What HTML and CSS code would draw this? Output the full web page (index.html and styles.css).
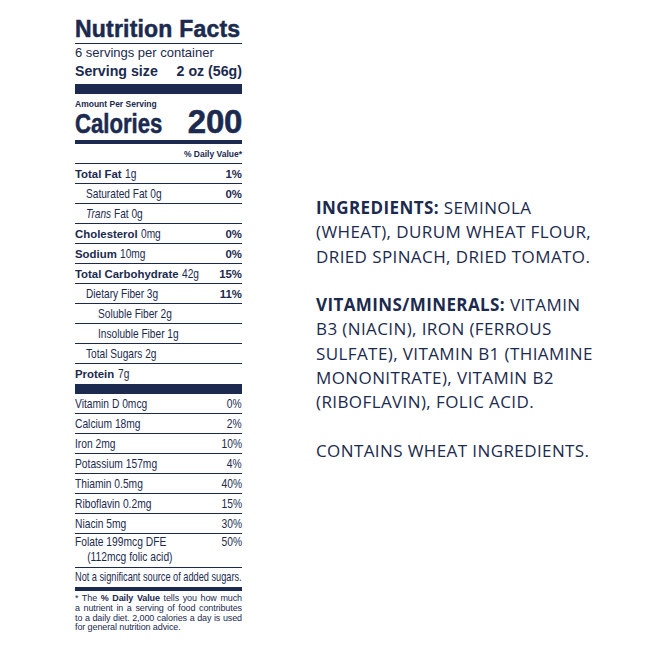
FILE: index.html
```html
<!DOCTYPE html>
<html lang="en">
<head>
<meta charset="utf-8">
<title>Nutrition Facts</title>
<link rel="stylesheet" href="styles.css">
</head>
<body>
<main class="page">
  <section class="label">
    <h1 class="title">Nutrition Facts</h1>
    <p class="servings">6 servings per container</p>
    <p class="serving-size"><span>Serving size</span><span>2 oz (56g)</span></p>
    <div class="bar bar-thick"></div>
    <p class="amount">Amount Per Serving</p>
    <p class="calories"><span class="cal-label">Calories</span><span class="cal-value">200</span></p>
    <div class="bar bar-mid"></div>
    <p class="dv-head">% Daily Value*</p>
    <ul class="rows">
      <li class="row"><span><b>Total Fat</b> <span class="n">1g</span></span><b>1%</b></li>
      <li class="row ind1"><span class="n">Saturated Fat 0g</span><b>0%</b></li>
      <li class="row ind1"><span class="n"><i>Trans</i> Fat 0g</span></li>
      <li class="row"><span><b>Cholesterol</b> <span class="n">0mg</span></span><b>0%</b></li>
      <li class="row"><span><b>Sodium</b> <span class="n">10mg</span></span><b>0%</b></li>
      <li class="row"><span><b>Total Carbohydrate</b> <span class="n">42g</span></span><b>15%</b></li>
      <li class="row ind1"><span class="n">Dietary Fiber 3g</span><b>11%</b></li>
      <li class="row ind2"><span class="n">Soluble Fiber 2g</span></li>
      <li class="row ind2"><span class="n">Insoluble Fiber 1g</span></li>
      <li class="row ind1"><span class="n">Total Sugars 2g</span></li>
      <li class="row last"><span><b>Protein</b> <span class="n">7g</span></span></li>
    </ul>
    <div class="bar bar-thick"></div>
    <ul class="rows vitamins">
      <li class="vrow"><span class="n">Vitamin D 0mcg</span><span class="n r">0%</span></li>
      <li class="vrow"><span class="n">Calcium 18mg</span><span class="n r">2%</span></li>
      <li class="vrow"><span class="n">Iron 2mg</span><span class="n r">10%</span></li>
      <li class="vrow"><span class="n">Potassium 157mg</span><span class="n r">4%</span></li>
      <li class="vrow"><span class="n">Thiamin 0.5mg</span><span class="n r">40%</span></li>
      <li class="vrow"><span class="n">Riboflavin 0.2mg</span><span class="n r">15%</span></li>
      <li class="vrow"><span class="n">Niacin 5mg</span><span class="n r">30%</span></li>
      <li class="vrow folate"><span class="n">Folate 199mcg DFE<br><span class="sub">(112mcg folic acid)</span></span><span class="n r">50%</span></li>
    </ul>
    <p class="not-sig"><span class="n">Not a significant source of added sugars.</span></p>
    <div class="bar bar-mid"></div>
    <div class="footnote">
      <span class="fl">* The <b>% Daily Value</b> tells you how much</span>
      <span class="fl">a nutrient in a serving of food contributes</span>
      <span class="fl">to a daily diet. 2,000 calories a day is used</span>
      <span class="fl fl-last">for general nutrition advice.</span>
    </div>
  </section>
  <section class="ingredients">
    <p class="para"><b>INGREDIENTS:</b> SEMINOLA<br>(WHEAT), DURUM WHEAT FLOUR,<br>DRIED SPINACH, DRIED TOMATO.</p>
    <p class="para"><b>VITAMINS/MINERALS:</b> VITAMIN<br>B3 (NIACIN), IRON (FERROUS<br>SULFATE), VITAMIN B1 (THIAMINE<br>MONONITRATE), VITAMIN B2<br>(RIBOFLAVIN), FOLIC ACID.</p>
    <p class="para">CONTAINS WHEAT INGREDIENTS.</p>
  </section>
</main>
</body>
</html>
```

FILE: styles.css
```css
* { box-sizing: border-box; }

html, body {
  margin: 0;
  padding: 0;
  background: #ffffff;
}

.page {
  display: flex;
  align-items: flex-start;
  padding: 16px 0 0 75px;
  color: #1b2a4e;
  font-family: "Liberation Sans", Arial, sans-serif;
}

.label {
  width: 167px;
  flex: none;
}

.label p { margin: 0; }

.title {
  margin: 0;
  font-size: 23px;
  line-height: 27px;
  font-weight: 700;
  letter-spacing: 0.2px;
  white-space: nowrap;
  -webkit-text-stroke: 0.5px #1b2a4e;
  border-bottom: 1px solid #1b2a4e;
}

.servings {
  padding-top: 2px;
  font-size: 13px;
  line-height: 14px;
}

.label .serving-size {
  display: flex;
  justify-content: space-between;
  padding-top: 3px;
  font-size: 14.2px;
  line-height: 16px;
  font-weight: 700;
  margin-bottom: 5px;
}

.bar { background: #1b2a4e; }
.bar-thick { height: 10px; }
.bar-mid { height: 4px; }

.amount {
  padding-top: 5px;
  font-size: 8.5px;
  line-height: 10px;
  font-weight: 700;
}

.label .calories {
  display: flex;
  justify-content: space-between;
  align-items: baseline;
  height: 26px;
  line-height: 26px;
  font-weight: 700;
  margin-bottom: 5px;
  -webkit-text-stroke: 0.5px #1b2a4e;
}

.cal-label {
  display: inline-block;
  font-size: 27px;
  transform: scaleX(0.82);
  transform-origin: left center;
}

.cal-value { font-size: 33px; letter-spacing: -0.3px; }

.dv-head {
  padding: 5px 0 4px;
  font-size: 8.5px;
  line-height: 10px;
  font-weight: 700;
  text-align: right;
  border-bottom: 1px solid #1b2a4e;
}

.rows {
  list-style: none;
  margin: 0;
  padding: 0;
}

.row, .vrow {
  display: flex;
  justify-content: space-between;
  align-items: baseline;
  height: 20px;
  line-height: 19px;
  border-bottom: 1px solid #1b2a4e;
  white-space: nowrap;
}

.row { font-size: 13px; }
.vrow { font-size: 13.5px; }

/* narrow (condensed) text: Arial-width font compressed horizontally */
.n {
  display: inline-block;
  transform: scaleX(0.78);
  transform-origin: left center;
}

.vrow .n { transform: scaleX(0.76); }
.n.r { transform-origin: right center; }

.row b {
  font-size: 11.4px;
  font-weight: 700;
}

.row i { font-style: italic; }

.ind1 { padding-left: 11px; }
.ind2 { padding-left: 23px; }

.row.last { border-bottom: 0; }

.vrow.folate {
  height: 34px;
  line-height: 15px;
  align-items: flex-start;
}

.sub { padding-left: 16px; }

.not-sig {
  height: 19px;
  line-height: 18px;
  font-size: 12.6px;
  white-space: nowrap;
}

.not-sig .n { transform: scaleX(0.73); }

.footnote {
  padding-top: 3px;
  font-size: 9px;
  line-height: 9.8px;
  letter-spacing: -0.1px;
}

.fl {
  display: block;
  white-space: nowrap;
  text-align: justify;
  text-align-last: justify;
}

.fl.fl-last { text-align-last: left; }

.footnote b { font-weight: 700; }

.ingredients {
  margin: 180px 0 0 74px;
  font-family: "Open Sans", sans-serif;
  font-size: 17px;
  line-height: 24.3px;
  letter-spacing: 0.4px;
  white-space: nowrap;
}

.para {
  margin: 0 0 24.3px;
}

.para b { font-weight: 700; }
```
